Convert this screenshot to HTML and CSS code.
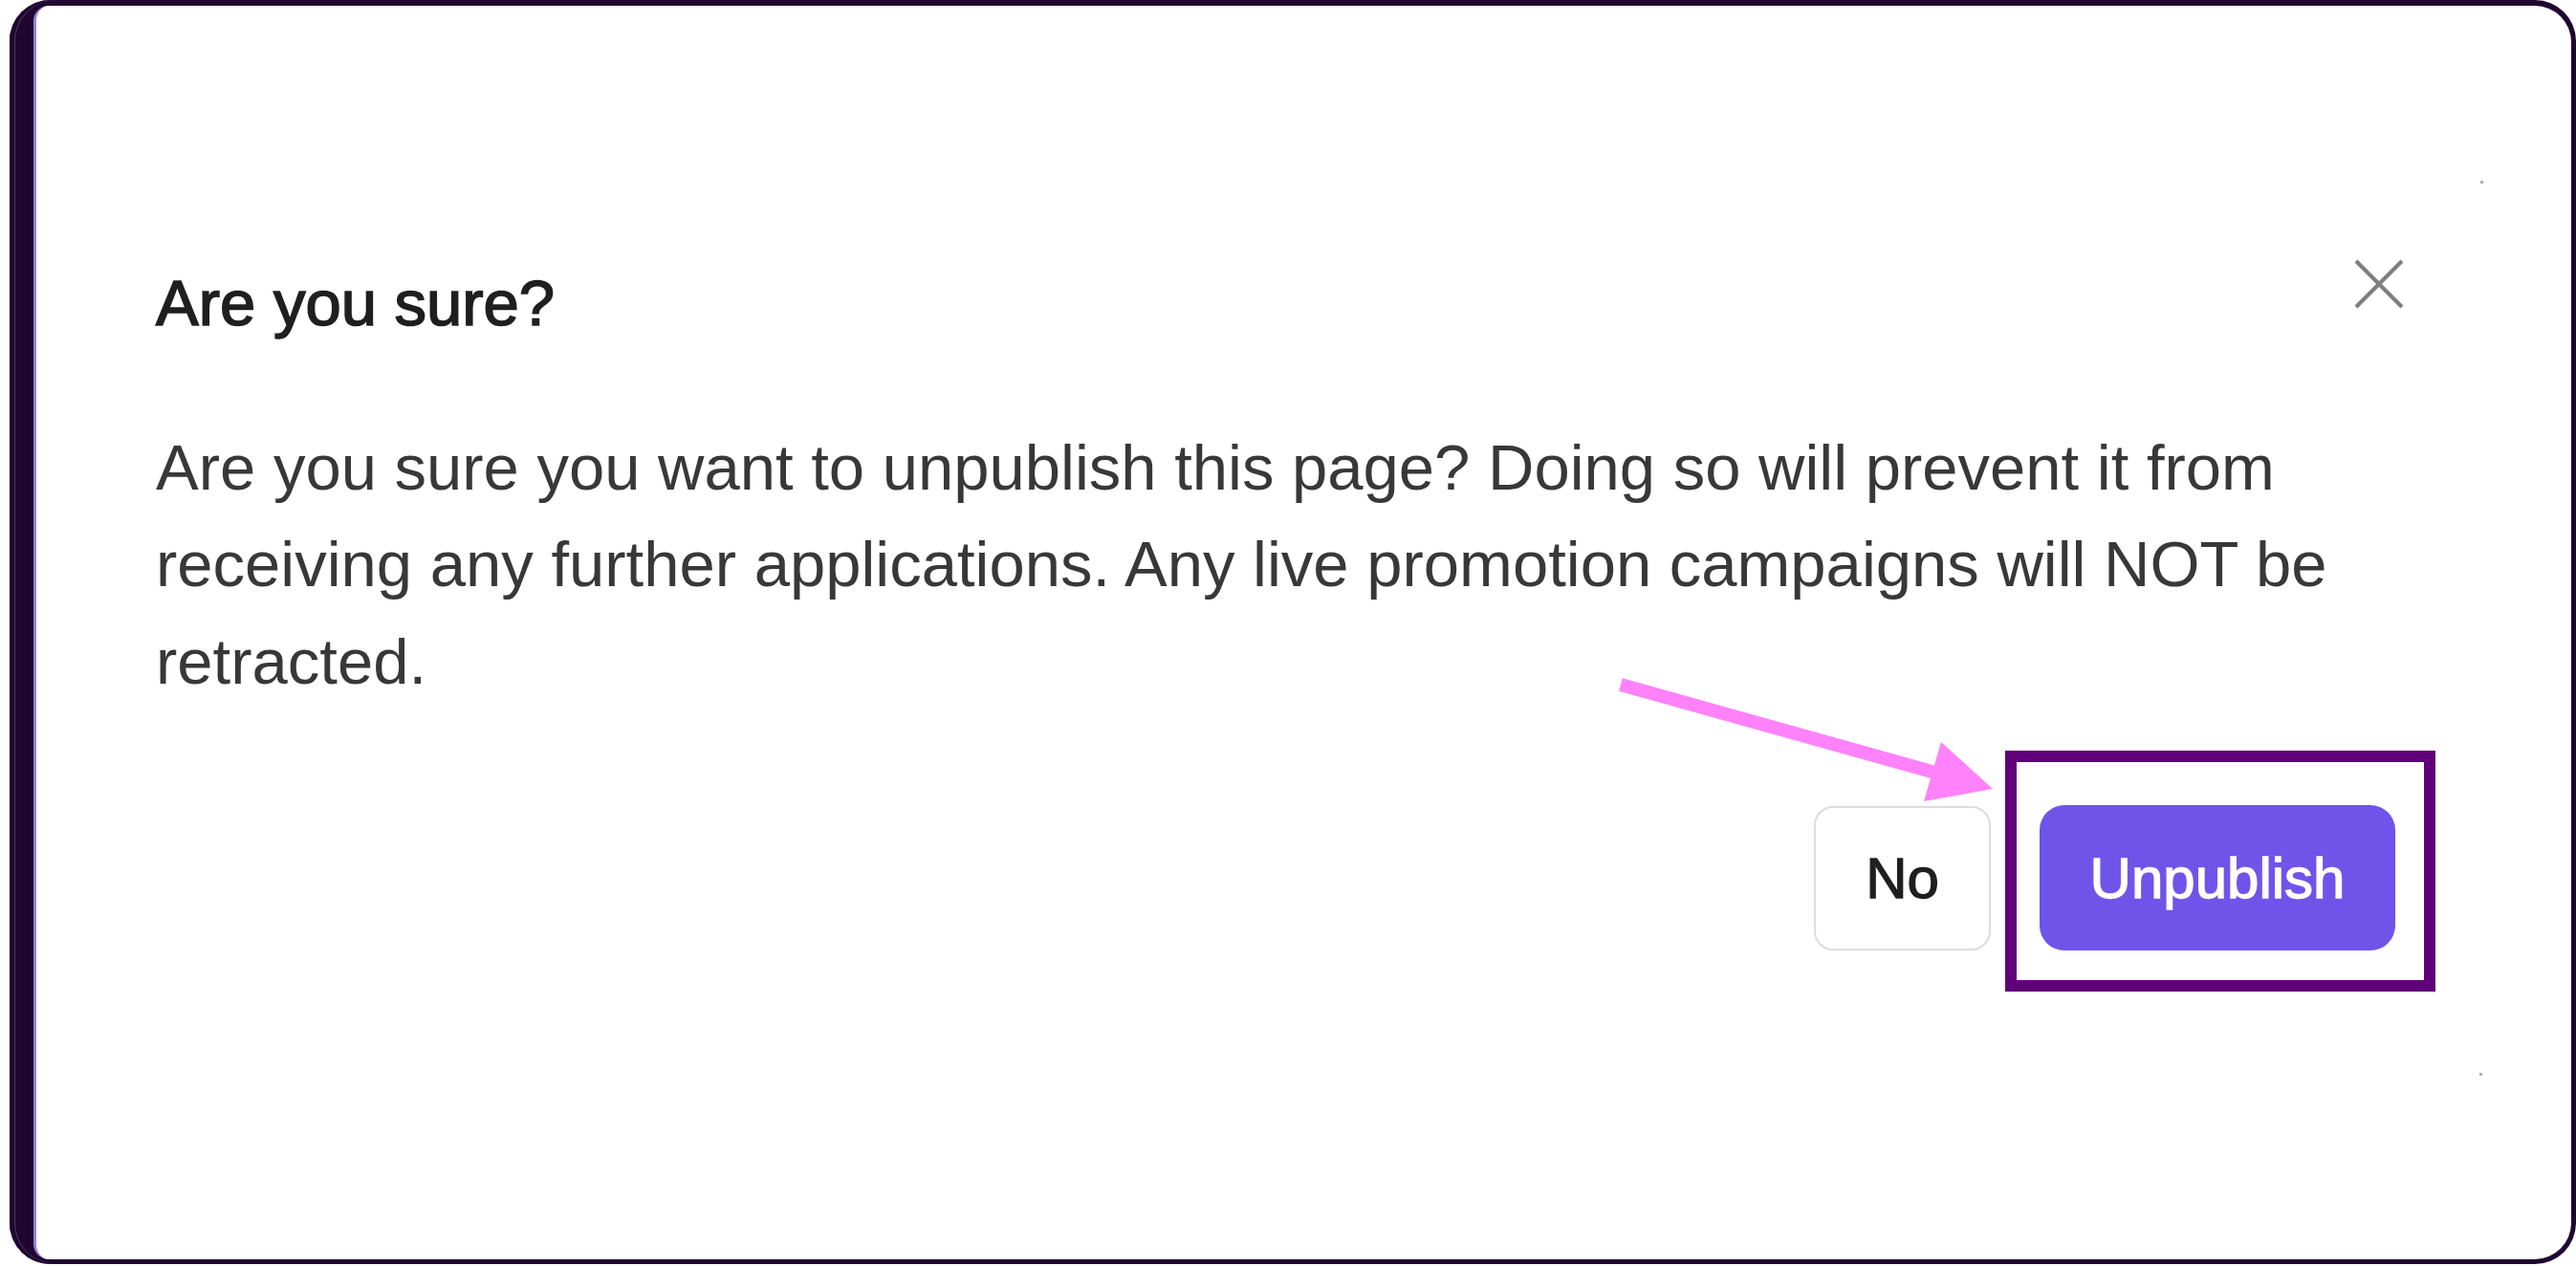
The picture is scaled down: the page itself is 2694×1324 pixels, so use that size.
FILE: index.html
```html
<!DOCTYPE html>
<html lang="en">
<head>
<meta charset="utf-8">
<title>Are you sure?</title>
<link rel="stylesheet" href="styles.css">
</head>
<body>
<div class="frame">
  <div class="panel">
    <div class="dialog">
      <div class="header">
        <h2 class="title">Are you sure?</h2>
        <button class="close" aria-label="Close">
          <svg viewBox="0 0 52 52" width="52" height="52"><path d="M2 2 L50 50 M50 2 L2 50" stroke="#7f7f7f" stroke-width="4.2" fill="none"/></svg>
        </button>
      </div>
      <p class="message">Are you sure you want to unpublish this page? Doing so will prevent it from<br>receiving any further applications. Any live promotion campaigns will NOT be<br>retracted.</p>
      <div class="actions">
        <button class="btn btn-no">No</button>
        <div class="primary-wrap">
          <button class="btn btn-primary">Unpublish</button>
          <span class="highlight"></span>
        </div>
      </div>
    </div>
    <svg class="arrow" viewBox="0 0 420 160" width="420" height="160">
      <line x1="17" y1="20" x2="346" y2="112" stroke="#ff82fb" stroke-width="14"/>
      <polygon points="406,129 352,80 334,142" fill="#ff82fb"/>
    </svg>
    <span class="speck speck-top"></span>
    <span class="speck speck-bottom"></span>
  </div>
</div>
</body>
</html>
```

FILE: styles.css
```css
html, body {
  margin: 0;
  padding: 0;
  background: #ffffff;
}

body {
  width: 2694px;
  height: 1324px;
  overflow: hidden;
  font-family: "Liberation Sans", Arial, sans-serif;
}

.frame {
  margin-left: 10px;
  height: 1322px;
  box-sizing: border-box;
  background: #200530;
  border-radius: 43px;
  padding: 6px 5px 5px 25px;
  box-shadow: inset 5px 0 0 #200530, inset 6px 0 0 #4d3b66;
}

.panel {
  position: relative;
  height: 100%;
  box-sizing: border-box;
  background: #ffffff;
  border-left: 3px solid #9484d4;
  border-radius: 16px 38px 38px 16px;
  padding: 260px 175px 0 125px;
}

.header {
  display: flex;
  justify-content: space-between;
  align-items: flex-start;
}

.title {
  margin: 0;
  font-size: 67px;
  line-height: 101.5px;
  font-weight: 400;
  color: #1f1f1f;
  -webkit-text-stroke: 1.6px #1f1f1f;
}

.close {
  margin-top: 5px;
  width: 52px;
  height: 52px;
  padding: 0;
  border: 0;
  background: transparent;
  display: block;
}

.close svg {
  display: block;
}

.message {
  margin: 70px 0 0 0;
  font-size: 67px;
  line-height: 101.5px;
  color: #383838;
}

.actions {
  display: flex;
  justify-content: flex-end;
  align-items: center;
  gap: 51px;
  margin-top: 100px;
  padding-right: 9px;
}

.btn {
  font-family: "Liberation Sans", Arial, sans-serif;
  font-size: 60px;
  box-sizing: border-box;
  display: flex;
  align-items: center;
  justify-content: center;
  padding: 0;
  cursor: pointer;
}

.btn-no {
  width: 185px;
  height: 151px;
  background: #ffffff;
  border: 2px solid #dcdcdc;
  border-radius: 20px;
  color: #1f1f1f;
  -webkit-text-stroke: 1.3px #1f1f1f;
}

.primary-wrap {
  position: relative;
}

.btn-primary {
  width: 372px;
  height: 152px;
  background: #6f54ea;
  border: 0;
  border-radius: 26px;
  color: #ffffff;
  -webkit-text-stroke: 1.3px #ffffff;
}

.highlight {
  position: absolute;
  left: -36px;
  top: -57px;
  width: 450px;
  height: 252px;
  box-sizing: border-box;
  border: 12px solid #5f0078;
  pointer-events: none;
}

.arrow {
  position: absolute;
  left: 1640px;
  top: 690px;
}

.speck {
  position: absolute;
  width: 3px;
  height: 3px;
  background: #b0b0b0;
}

.speck-top {
  left: 2556px;
  top: 183px;
}

.speck-bottom {
  left: 2555px;
  top: 1116px;
}
```
